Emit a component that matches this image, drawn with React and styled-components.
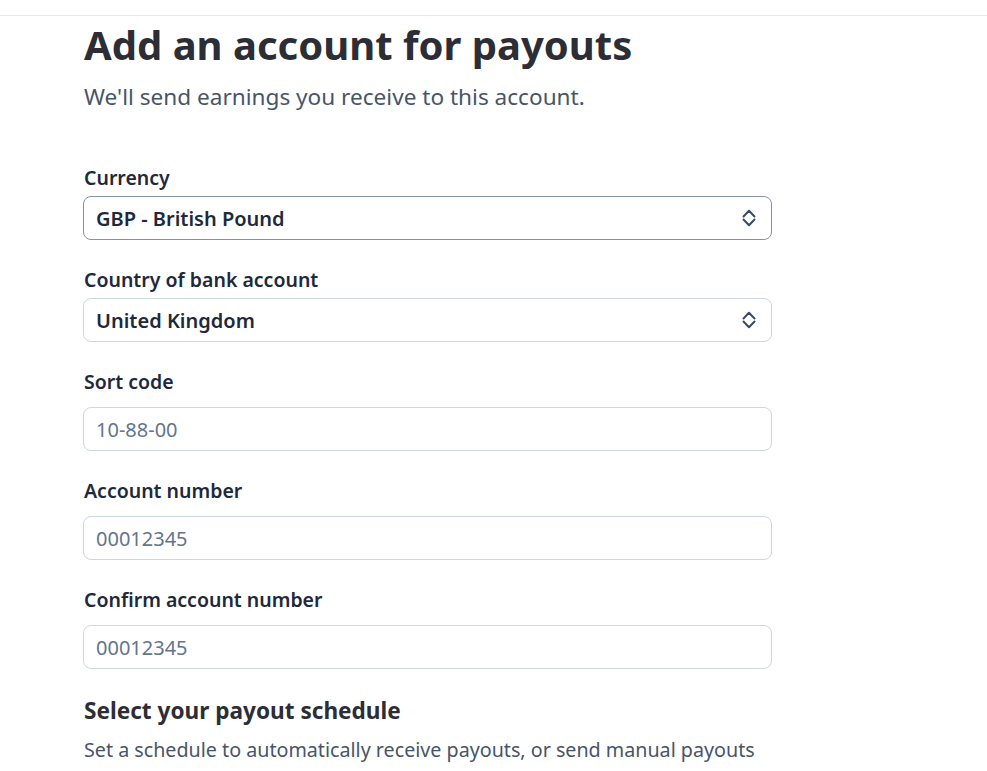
import styled, { createGlobalStyle } from "styled-components";

export default function App() {
  return (
    <>
      <GlobalStyle />
      <TopBar />
      <Page>
        <Header>
          <Title>Add an account for payouts</Title>
          <Subtitle>We'll send earnings you receive to this account.</Subtitle>
        </Header>

        <Form>
          <Field>
            <Label>Currency</Label>
            <SelectBox focused>
              <span>GBP - British Pound</span>
              <UpDown />
            </SelectBox>
          </Field>

          <Field>
            <Label>Country of bank account</Label>
            <SelectBox>
              <span>United Kingdom</span>
              <UpDown />
            </SelectBox>
          </Field>

          <Field input>
            <Label>Sort code</Label>
            <Input placeholder="10-88-00" />
          </Field>

          <Field input>
            <Label>Account number</Label>
            <Input placeholder="00012345" />
          </Field>

          <Field input>
            <Label>Confirm account number</Label>
            <Input placeholder="00012345" />
          </Field>

          <Section>
            <SectionTitle>Select your payout schedule</SectionTitle>
            <SectionText>
              Set a schedule to automatically receive payouts, or send manual payouts
            </SectionText>
          </Section>
        </Form>
      </Page>
    </>
  );
}

function UpDown() {
  return (
    <Chevrons viewBox="0 0 14 18" fill="none" stroke="currentColor" strokeWidth="2" strokeLinecap="round" strokeLinejoin="round">
      <path d="M1.5 7.5 7 1.8l5.5 5.7" />
      <path d="M1.5 10.5 7 16.2l5.5-5.7" />
    </Chevrons>
  );
}

/* STYLES */
const GlobalStyle = createGlobalStyle`
  body {
    margin: 0;
    background: #ffffff;
    font-family: "Noto Sans", "Open Sans", sans-serif;
    color: #1e293b;
  }
  * {
    box-sizing: border-box;
  }
`;

const TopBar = styled.div`
  height: 16px;
  border-bottom: 1px solid #e2e8f0;
`;

const Page = styled.main`
  width: 689px;
  margin-left: 83px;
`;

const Header = styled.div`
  padding-top: 3px;
  padding-left: 1px;
`;

const Title = styled.h1`
  margin: 0;
  font-size: 40px;
  line-height: 52px;
  font-weight: 700;
  color: #2d2d35;
`;

const Subtitle = styled.p`
  margin: 11px 0 0;
  font-size: 22.6px;
  line-height: 30px;
  color: #475569;
`;

const Form = styled.div`
  display: flex;
  flex-direction: column;
  gap: 27px;
  margin-top: 53px;
`;

const Field = styled.div`
  display: flex;
  flex-direction: column;
  gap: ${(p) => (p.input ? "12px" : "5px")};
`;

const Label = styled.label`
  padding-left: 1px;
  font-size: 19.5px;
  line-height: 26px;
  font-weight: 600;
  color: #1e293b;
`;

const SelectBox = styled.div`
  display: flex;
  align-items: center;
  justify-content: space-between;
  height: 44px;
  padding: 0 15px 0 12px;
  border: 1px solid ${(p) => (p.focused ? "#8592a6" : "#cdd6e3")};
  border-radius: 8px;
  font-size: 20px;
  font-weight: 600;
  color: #1e293b;
  cursor: pointer;
`;

const Chevrons = styled.svg`
  width: 14px;
  height: 18px;
  color: #3b4a63;
`;

const Input = styled.input`
  height: 44px;
  padding: 0 12px;
  border: 1px solid #cdd6e3;
  border-radius: 8px;
  font-family: inherit;
  font-size: 20px;
  color: #1e293b;
  outline: none;

  &::placeholder {
    color: #64748b;
  }
`;

const Section = styled.div`
  padding-left: 1px;
`;

const SectionTitle = styled.h3`
  margin: 0;
  font-size: 22.6px;
  line-height: 30px;
  font-weight: 700;
  color: #2d2d35;
`;

const SectionText = styled.p`
  margin: 11px 0 0;
  font-size: 19.7px;
  line-height: 26px;
  color: #475569;
`;
